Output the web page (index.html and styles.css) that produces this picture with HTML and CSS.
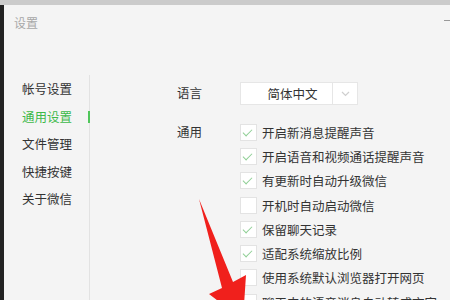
FILE: index.html
```html
<!DOCTYPE html>
<html lang="zh-CN">
<head>
  <meta charset="UTF-8" />
  <title>设置</title>
  <link rel="stylesheet" href="styles.css">
</head>
<body>
  <div class="screen">
    <div class="window">
      <div class="title-bar">
        <span class="title">设置</span>
        <span class="min-btn"></span>
      </div>
      <div class="content">
        <ul class="sidebar">
          <li>帐号设置</li>
          <li class="active">通用设置</li>
          <li>文件管理</li>
          <li>快捷按键</li>
          <li>关于微信</li>
        </ul>
        <div class="panel">
          <div class="row lang-row">
            <span class="row-label">语言</span>
            <div class="select">
              <span class="select-text">简体中文</span>
              <span class="select-arrow">
                <svg width="9" height="6" viewBox="0 0 9 6"><path d="M1 1 L4.5 4.5 L8 1" fill="none" stroke="#cfcfcf" stroke-width="1.2"/></svg>
              </span>
            </div>
          </div>
          <div class="row">
            <span class="row-label">通用</span>
            <div class="options">
              <label class="option checked"><span class="box"></span>开启新消息提醒声音</label>
              <label class="option checked"><span class="box"></span>开启语音和视频通话提醒声音</label>
              <label class="option checked"><span class="box"></span>有更新时自动升级微信</label>
              <label class="option"><span class="box"></span>开机时自动启动微信</label>
              <label class="option checked"><span class="box"></span>保留聊天记录</label>
              <label class="option checked"><span class="box"></span>适配系统缩放比例</label>
              <label class="option"><span class="box"></span>使用系统默认浏览器打开网页</label>
              <label class="option"><span class="box"></span>聊天中的语音消息自动转成文字</label>
            </div>
          </div>
        </div>
      </div>
    </div>
    <svg class="arrow" width="60" height="125" viewBox="195 195 60 125">
      <polygon points="199,199 233,282 246,275 243,320 209,294 222,288" fill="#f0201c"/>
    </svg>
  </div>
</body>
</html>
```

FILE: styles.css
```css
body {
  margin: 0;
  font-family: "Noto Sans CJK SC", "Noto Sans", sans-serif;
  background: #f4f4f4;
}

.screen {
  position: relative;
  width: 450px;
  height: 300px;
  overflow: hidden;
  background: #f4f4f4;
  border-top: 5px solid #cbcbcb;
  box-sizing: border-box;
}

.window {
  height: 100%;
  border-left: 4px solid #222;
  box-sizing: border-box;
}

.title-bar {
  display: flex;
  justify-content: space-between;
  align-items: center;
  height: 34px;
  padding-left: 10px;
}

.title {
  font-size: 12px;
  color: #a8a8a8;
}

.min-btn {
  width: 6px;
  height: 1px;
  background: #999;
  margin-top: -4px;
}

.content {
  display: flex;
  padding-top: 36px;
}

.sidebar {
  list-style: none;
  margin: 0;
  padding: 0 0 0 18px;
  width: 67px;
  border-right: 1px solid #e2e2e2;
  height: 230px;
}

.sidebar li {
  position: relative;
  font-size: 12.5px;
  line-height: 27.5px;
  color: #333;
  white-space: nowrap;
}

.sidebar li.active {
  color: #3db94a;
}

.sidebar li.active::after {
  content: "";
  position: absolute;
  right: -1px;
  top: 8px;
  width: 2px;
  height: 12px;
  background: #50c65a;
}

.panel {
  padding-left: 87px;
  margin-top: 6px;
}

.row {
  display: flex;
}

.lang-row {
  align-items: center;
  margin-bottom: 15px;
}

.row-label {
  width: 63px;
  font-size: 12.5px;
  color: #333;
  line-height: 24px;
}

.select {
  display: flex;
  width: 116px;
  height: 21px;
  background: #fff;
  border: 1px solid #e6e6e6;
  margin-top: 1px;
}

.select-text {
  flex: 1;
  text-align: center;
  padding-left: 12px;
  font-size: 12.5px;
  line-height: 21px;
  color: #333;
}

.select-arrow {
  width: 24px;
  border-left: 1px solid #e6e6e6;
  display: flex;
  align-items: center;
  justify-content: center;
}

.options {
  display: flex;
  flex-direction: column;
}

.option {
  display: flex;
  align-items: center;
  height: 24.3px;
  font-size: 12.5px;
  color: #333;
  white-space: nowrap;
}

.box {
  position: relative;
  width: 15px;
  height: 15px;
  border: 1px solid #e3e3e3;
  background: #fff;
  margin-right: 5px;
}

.option.checked .box::after {
  content: "";
  position: absolute;
  left: 4px;
  top: 2px;
  width: 4px;
  height: 8px;
  border-right: 1.5px solid #8fcf95;
  border-bottom: 1.5px solid #8fcf95;
  transform: rotate(45deg);
}

.arrow {
  position: absolute;
  left: 195px;
  top: 190px;
}
```
